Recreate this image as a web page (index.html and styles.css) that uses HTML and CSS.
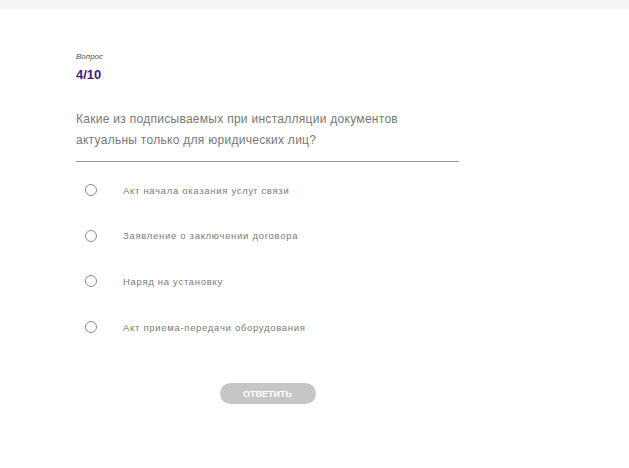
FILE: index.html
```html
<!DOCTYPE html>
<html lang="ru">
<head>
<meta charset="utf-8">
<link rel="stylesheet" href="styles.css">
</head>
<body>
<div class="topbar"></div>
<main class="quiz">
  <div class="label">Вопрос</div>
  <div class="counter">4/10</div>
  <p class="question">Какие из подписываемых при инсталляции документов<br>актуальны только для юридических лиц?</p>
  <ul class="options">
    <li class="option"><span class="radio"></span><span class="opt-text">Акт начала оказания услуг связи</span></li>
    <li class="option"><span class="radio"></span><span class="opt-text">Заявление о заключении договора</span></li>
    <li class="option"><span class="radio"></span><span class="opt-text">Наряд на установку</span></li>
    <li class="option"><span class="radio"></span><span class="opt-text">Акт приема-передачи оборудования</span></li>
  </ul>
  <div class="actions"><button class="submit">ОТВЕТИТЬ</button></div>
</main>
</body>
</html>
```
FILE: styles.css
```css
html, body {
  margin: 0;
  padding: 0;
  background: #fff;
  font-family: "Liberation Sans", Arial, sans-serif;
}
.topbar {
  height: 9px;
  background: #f4f4f4;
}
.quiz {
  width: 383px;
  padding: 43px 0 0 76px;
}
.label {
  font-size: 8px;
  font-style: italic;
  color: #555;
  line-height: 10px;
}
.counter {
  margin-top: 5px;
  font-size: 13px;
  font-weight: bold;
  color: #4a1a7c;
  line-height: 15px;
}
.question {
  margin: 27px 0 0;
  font-size: 12px;
  letter-spacing: 0.28px;
  line-height: 21px;
  color: #777;
  padding-bottom: 10px;
  border-bottom: 1px solid #9a9a9a;
}
.options {
  list-style: none;
  margin: 0;
  padding: 22px 0 0 9px;
}
.option {
  display: flex;
  align-items: center;
  height: 12px;
  margin-bottom: 33.7px;
}
.radio {
  width: 12px;
  height: 12px;
  border: 1px solid #8a8a8a;
  border-radius: 50%;
  box-sizing: border-box;
  flex: none;
}
.opt-text {
  margin-left: 26px;
  font-size: 9.5px;
  letter-spacing: 0.7px;
  color: #7a7a7a;
}
.actions {
  display: flex;
  justify-content: center;
  width: 383px;
  margin-top: 50px;
}
.submit {
  width: 96px;
  height: 21px;
  border: none;
  border-radius: 11px;
  background: #c6c6c6;
  color: #fff;
  font-family: "Liberation Sans", Arial, sans-serif;
  font-size: 9px;
  font-weight: bold;
  padding: 0;
}
```
